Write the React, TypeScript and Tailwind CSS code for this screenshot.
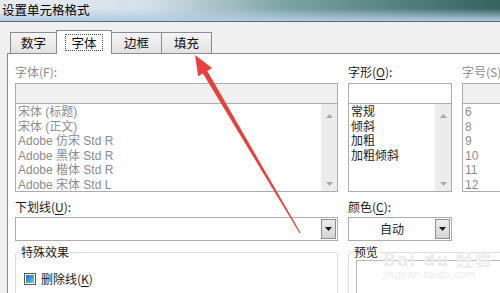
import React from 'react';

const FONT = "font-['Noto_Sans_CJK_SC','Noto_Sans',sans-serif]";
const LIST_FONT = "font-['Liberation_Sans','Noto_Sans_CJK_SC',sans-serif]";

function Tab({ label, width, active }: { label: string; width: string; active?: boolean }) {
  if (active) {
    return (
      <div
        className={`relative z-10 -mb-px -ml-px flex h-[24px] ${width} items-center justify-center border border-b-0 border-[#898c95] bg-white`}
      >
        <span className="border border-dotted border-[#555] px-[5px] text-[12.5px] leading-[15px] text-[#111]">
          {label}
        </span>
      </div>
    );
  }
  return (
    <div
      className={`-ml-px flex h-[21px] ${width} items-center justify-center border border-b-0 border-[#898c95] bg-[linear-gradient(#f4f4f4,#e2e2e2)] text-[12.5px] text-[#111] first:ml-0`}
    >
      {label}
    </div>
  );
}

function UpArrow() {
  return (
    <svg width="7" height="4" viewBox="0 0 7 4">
      <polygon points="0,4 3.5,0 7,4" fill="#a9a9a9" />
    </svg>
  );
}

function DownArrow({ color = '#a9a9a9' }: { color?: string }) {
  return (
    <svg width="7" height="4" viewBox="0 0 7 4">
      <polygon points="0,0 7,0 3.5,4" fill={color} />
    </svg>
  );
}

function ScrollTrack() {
  return (
    <div className="flex h-full w-[16px] shrink-0 flex-col items-center justify-between bg-[#ececec] pb-[5px] pt-[10px]">
      <UpArrow />
      <DownArrow />
    </div>
  );
}

function ListBox({
  items,
  disabled,
  inputDisabled,
  scroll = true,
}: {
  items: string[];
  disabled?: boolean;
  inputDisabled?: boolean;
  scroll?: boolean;
}) {
  return (
    <div className="flex flex-col border border-[#abadb3]">
      <div className={`h-[20px] border-b border-[#abadb3] ${inputDisabled ? 'bg-[#f0f0f0]' : 'bg-white'}`} />
      <div className="flex h-[87px] bg-white">
        <div
          className={`flex-1 pl-[2px] pt-[1px] text-[12px] leading-[14.6px] ${LIST_FONT} ${
            disabled ? 'text-[#8c8c8c]' : 'text-[#1a1a1a]'
          }`}
        >
          {items.map((it) => (
            <div key={it} className="h-[14.6px] whitespace-nowrap">
              {it}
            </div>
          ))}
        </div>
        {scroll && <ScrollTrack />}
      </div>
    </div>
  );
}

function Dropdown({ value }: { value?: string }) {
  return (
    <div className="flex h-[24px] border border-[#abadb3] bg-white">
      <div className="flex flex-1 items-center justify-center text-[12px] text-[#1a1a1a]">{value}</div>
      <div className="my-px mr-px flex w-[15px] items-center justify-center border border-[#8f8f8f] bg-[linear-gradient(#ececec,#d4d4d4)]">
        <DownArrow color="#1a1a1a" />
      </div>
    </div>
  );
}

function Label({ text, keyChar, disabled }: { text: string; keyChar: string; disabled?: boolean }) {
  return (
    <div
      className={`h-[16px] whitespace-nowrap text-[12px] leading-[16px] ${disabled ? 'text-[#8c8c8c]' : 'text-[#1a1a1a]'}`}
    >
      {text}(<span className={disabled ? '' : 'underline underline-offset-2'}>{keyChar}</span>):
    </div>
  );
}

export default function App() {
  return (
    <div className={`relative flex h-[293px] w-[500px] flex-col overflow-hidden bg-[#f0f0f0] ${FONT}`}>
      {/* Title bar */}
      <div className="flex h-[22px] shrink-0 items-center border-b border-[#56687d] bg-[linear-gradient(180deg,rgba(255,255,255,0)_40%,#b4cbe1_100%),linear-gradient(90deg,#e9eef3_0%,#d2dfea_30%,#79a2a3_58%,#34625f_100%)] pl-[2px] text-[12.5px] leading-none text-black">
        设置单元格格式
      </div>

      {/* Tabs */}
      <div className="flex h-[31px] shrink-0 items-end pl-[10px]">
        <Tab label="数字" width="w-[47px]" />
        <Tab label="字体" width="w-[56px]" active />
        <Tab label="边框" width="w-[51px]" />
        <Tab label="填充" width="w-[51px]" />
      </div>

      {/* Tab panel */}
      <div className="ml-[7px] flex-1 border-l border-t border-[#898c95] bg-white pl-[7px] pt-[10px]">
        <div className="grid grid-cols-[323px_104px_46px] gap-x-[10px]">
          <Label text="字体" keyChar="F" disabled />
          <Label text="字形" keyChar="O" />
          <Label text="字号" keyChar="S" disabled />

          <div className="mt-[3px]">
            <ListBox
              disabled
              inputDisabled
              items={[
                '宋体 (标题)',
                '宋体 (正文)',
                'Adobe 仿宋 Std R',
                'Adobe 黑体 Std R',
                'Adobe 楷体 Std R',
                'Adobe 宋体 Std L',
              ]}
            />
          </div>
          <div className="mt-[3px]">
            <ListBox items={['常规', '倾斜', '加粗', '加粗倾斜']} />
          </div>
          <div className="mt-[3px]">
            <ListBox disabled inputDisabled scroll={false} items={['6', '8', '9', '10', '11', '12']} />
          </div>

          <div className="mt-[7px]">
            <Label text="下划线" keyChar="U" />
          </div>
          <div className="col-span-2 mt-[7px]">
            <Label text="颜色" keyChar="C" />
          </div>

          <div className="mt-[2px]">
            <Dropdown />
          </div>
          <div className="col-span-2 mt-[2px] w-[104px]">
            <Dropdown value="自动" />
          </div>

          <fieldset className="mt-[4px] h-[60px] rounded-[3px] border border-[#d5dfe5] px-[4px]">
            <legend className="px-px text-[12px] leading-[14px] text-[#1a1a1a]">特殊效果</legend>
            <div className="mt-[13px] flex items-center gap-[5px] pl-[4px]">
              <div className="flex h-[12px] w-[12px] items-center justify-center border border-[#555] bg-white">
                <div className="h-[8px] w-[8px] bg-[linear-gradient(135deg,#1d6fb8,#6cc6ea)]" />
              </div>
              <span className="text-[12px] leading-[14px] text-[#1a1a1a]">
                删除线(<span className="underline underline-offset-2">K</span>)
              </span>
            </div>
          </fieldset>
          <fieldset className="col-span-2 mt-[4px] h-[60px] rounded-[3px] border border-[#d5dfe5] px-[4px]">
            <legend className="px-px text-[12px] leading-[14px] text-[#1a1a1a]">预览</legend>
            <div className="ml-[3px] mt-[1px] h-[40px] border border-[#b9b9b9] bg-white" />
          </fieldset>
        </div>
      </div>

      {/* Watermark */}
      <div className="pointer-events-none absolute left-[383px] top-[251px] flex flex-col font-['DejaVu_Sans','Noto_Sans_CJK_SC',sans-serif] text-[#ececec]">
        <span className="text-[17px] font-bold leading-[18px] tracking-[1px]">Bai du 经验</span>
        <span className="text-[10px] leading-[12px]">jingyan.baidu.com</span>
      </div>

      {/* Red arrow annotation */}
      <svg className="pointer-events-none absolute left-0 top-0" width="500" height="293" viewBox="0 0 500 293">
        <polygon
          points="195,55 212,68.1 207.3,70.9 300.6,232.7 299.6,233.3 202.9,73.5 198.2,76.3"
          fill="#e8403a"
        />
      </svg>
    </div>
  );
}
